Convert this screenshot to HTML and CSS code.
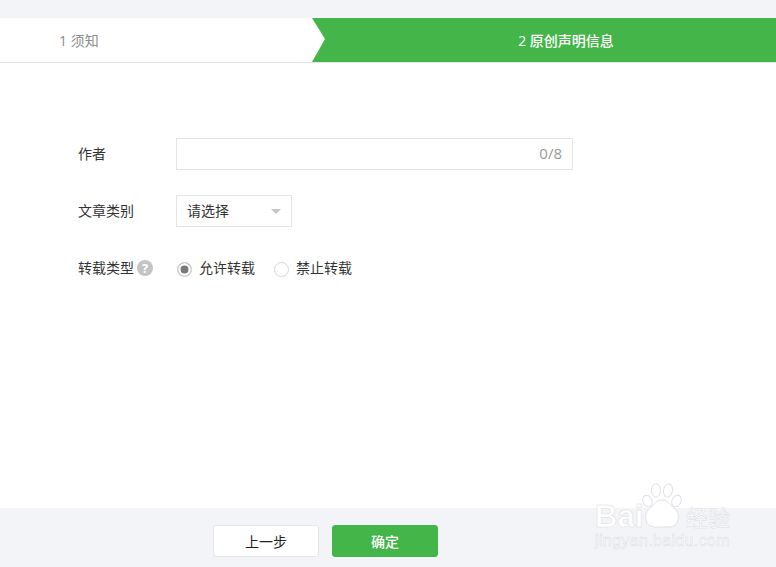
FILE: index.html
```html
<!DOCTYPE html>
<html lang="zh-CN">
<head>
  <meta charset="UTF-8" />
  <title>原创声明</title>
  <link rel="stylesheet" href="styles.css">
</head>
<body>
  <div class="steps">
    <div class="step">1 须知</div>
    <div class="step step-active">2 原创声明信息</div>
  </div>

  <form class="form">
    <div class="row">
      <label class="row-label">作者</label>
      <div class="input-box"><span class="counter">0/8</span></div>
    </div>
    <div class="row">
      <label class="row-label">文章类别</label>
      <div class="select-box"><span class="select-text">请选择</span><span class="caret"></span></div>
    </div>
    <div class="row">
      <label class="row-label">转载类型<span class="help">?</span></label>
      <div class="radios">
        <span class="radio radio-on">允许转载</span>
        <span class="radio">禁止转载</span>
      </div>
    </div>
  </form>

  <div class="footer">
    <button type="button" class="btn">上一步</button>
    <button type="button" class="btn btn-primary">确定</button>
  </div>

  <div class="watermark">
    <span class="wm-brand">Bai</span>
    <svg class="paw" width="42" height="46" viewBox="0 0 42 46">
      <g fill="#fff" stroke="#dfe0e4" stroke-width="1">
        <ellipse cx="6.5" cy="18" rx="4.5" ry="6" transform="rotate(-25 6.5 18)" />
        <ellipse cx="15" cy="7.5" rx="4.5" ry="6.5" />
        <ellipse cx="27" cy="7.5" rx="4.5" ry="6.5" transform="rotate(10 27 7.5)" />
        <ellipse cx="35.5" cy="18" rx="4.5" ry="6" transform="rotate(25 35.5 18)" />
        <path d="M21 17c6 0 8 5 13 9 6 5 4 18-6 18H14C4 44 2 31 8 26c5-4 7-9 13-9z" />
      </g>
      <text class="paw-text" x="21" y="38" text-anchor="middle">du</text>
    </svg>
    <span class="wm-cn">经验</span>
    <span class="wm-url">jingyan.baidu.com</span>
  </div>
</body>
</html>
```

FILE: styles.css
```css
* {
  box-sizing: border-box;
}
html, body {
  height: 100%;
}
body {
  margin: 0;
  display: flex;
  flex-direction: column;
  background: #f3f4f8;
  color: #333;
  font-family: "Open Sans", "Noto Sans CJK SC", sans-serif;
  font-size: 14px;
  overflow: hidden;
}
.steps {
  display: flex;
  height: 45px;
  margin-top: 18px;
  background: #fff;
  border-bottom: 1px solid #e4e5e9;
}
.step {
  width: 325px;
  padding-left: 59px;
  line-height: 45px;
  color: #8d8d8d;
}
.step-active {
  flex: 1;
  margin-left: -13px;
  height: 44px;
  padding-left: 44px;
  text-align: center;
  color: #fff;
  font-weight: 500;
  background: #44b549;
  clip-path: polygon(0 0, 100% 0, 100% 100%, 0 100%, 13px 21px);
}
.form {
  flex: 1;
  display: flex;
  flex-direction: column;
  gap: 25px;
  padding: 75px 0 0 78px;
  background: #fff;
}
.row {
  display: flex;
  align-items: center;
  height: 32px;
}
.row-label {
  display: flex;
  align-items: center;
  width: 98px;
  padding-bottom: 2px;
  color: #333;
}
.help {
  width: 16px;
  height: 16px;
  margin-left: 3px;
  margin-top: 2px;
  border-radius: 50%;
  background: #c4c4c4;
  color: #fff;
  font-size: 13px;
  font-weight: 700;
  line-height: 16px;
  text-align: center;
}
.input-box {
  width: 397px;
  height: 32px;
  padding-right: 10px;
  border: 1px solid #e4e5e9;
  line-height: 29px;
  text-align: right;
}
.counter {
  color: #9a9a9a;
  font-size: 15px;
}
.select-box {
  display: flex;
  align-items: center;
  justify-content: space-between;
  width: 116px;
  height: 32px;
  padding: 0 10px;
  border: 1px solid #e4e5e9;
}
.select-text {
  padding-bottom: 2px;
}
.caret {
  width: 0;
  height: 0;
  border-left: 5px solid transparent;
  border-right: 5px solid transparent;
  border-top: 5px solid #c4c4c4;
}
.radios {
  display: flex;
  gap: 19px;
  padding-left: 1px;
  line-height: 18px;
}
.radio {
  display: flex;
  align-items: center;
  gap: 7px;
}
.radio::before {
  content: "";
  width: 13px;
  height: 13px;
  margin-top: 2px;
  border: 1px solid #d5d5d5;
  border-radius: 50%;
  background: #fff;
}
.radio-on::before {
  background: #7a7a7a;
  box-shadow: inset 0 0 0 2.5px #fff;
}
.footer {
  display: flex;
  gap: 13px;
  height: 59px;
  padding: 17px 0 0 213px;
}
.btn {
  width: 106px;
  height: 32px;
  padding: 0;
  border: 1px solid #e4e5e9;
  border-radius: 3px;
  background: #fff;
  color: #222;
  font: inherit;
}
.btn-primary {
  border-color: #44b549;
  background: #44b549;
  color: #fff;
  font-weight: 500;
}
.watermark {
  position: absolute;
  left: 595px;
  top: 483px;
  width: 140px;
  height: 70px;
  color: #fff;
  -webkit-text-stroke: 0.5px #dadbe0;
}
.paw {
  position: absolute;
  left: 46px;
  top: 0;
}
.paw-text {
  font-family: "Liberation Sans", sans-serif;
  font-size: 15px;
  font-weight: 700;
  fill: #fff;
}
.wm-brand {
  position: absolute;
  left: 0;
  top: 21px;
  font: 700 31px/26px "Liberation Sans", sans-serif;
}
.wm-cn {
  position: absolute;
  left: 91px;
  top: 18px;
  font-size: 22px;
  font-family: "Noto Sans CJK SC", sans-serif;
  line-height: 30px;
}
.wm-url {
  position: absolute;
  left: 0;
  top: 49px;
  font: 16px/18px "Liberation Sans", sans-serif;
  letter-spacing: 0.35px;
}
```
